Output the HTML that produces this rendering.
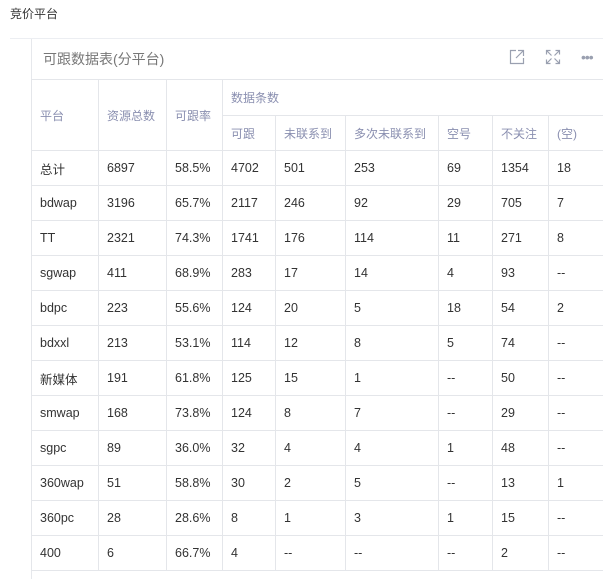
<!DOCTYPE html>
<html><head><meta charset="utf-8"><style>
body{margin:0;width:603px;height:570px;overflow:hidden;background:#fff;font-family:"Liberation Sans","Noto Sans CJK SC",sans-serif;position:relative}
.top{position:absolute;left:10px;top:5px;font-size:12px;color:#333}
.hr{position:absolute;left:10px;right:0;top:38px;height:1px;background:#eceef2}
.card{position:absolute;left:31px;top:39px;width:580px;height:540px;border-left:1px solid #e6e8ec}
.title{position:absolute;left:43px;top:49px;font-size:14px;color:#777}
table{position:absolute;left:31px;top:79px;border-collapse:collapse;font-size:12.5px;color:#333;table-layout:fixed;width:587px}
td{border:1px solid #e4e6ea;height:35px;padding:0 0 0 8px;box-sizing:border-box;white-space:nowrap}
.h td{color:#8a8fb0;font-size:12px}
.ic{position:absolute;top:49px;color:#aab;font-size:14px}
</style></head><body>
<div class="top">竞价平台</div>
<div class="hr"></div>
<div class="card"></div>
<div class="title">可跟数据表(分平台)</div>
<svg class="ic" style="left:509px;top:49px" width="16" height="16" viewBox="0 0 16 16" fill="none" stroke="#9aa0b0" stroke-width="1.2"><path d="M7 1.5H1.5v13h13V9M9 1.5h5.5V7M14.5 1.5L7 9"/></svg>
<svg class="ic" style="left:545px;top:49px" width="16" height="16" viewBox="0 0 16 16" fill="none" stroke="#9aa0b0" stroke-width="1.2"><path d="M1.5 5.5v-4h4M10.5 1.5h4v4M14.5 10.5v4h-4M5.5 14.5h-4v-4M1.5 1.5l5 5M14.5 1.5l-5 5M14.5 14.5l-5-5M1.5 14.5l5-5"/></svg>
<div style="position:absolute;left:581px;top:49px;font-size:14px;color:#9aa0b0;letter-spacing:-1px">•••</div>
<table>
<colgroup><col style="width:67px"><col style="width:68px"><col style="width:56px"><col style="width:53px"><col style="width:70px"><col style="width:93px"><col style="width:54px"><col style="width:56px"><col style="width:70px"></colgroup>
<tr class="h"><td rowspan="2" style="height:71px">平台</td><td rowspan="2">资源总数</td><td rowspan="2">可跟率</td><td colspan="6" style="height:36px">数据条数</td></tr>
<tr class="h"><td style="height:35px">可跟</td><td>未联系到</td><td>多次未联系到</td><td>空号</td><td>不关注</td><td>(空)</td></tr>
<tr><td>总计</td><td>6897</td><td>58.5%</td><td>4702</td><td>501</td><td>253</td><td>69</td><td>1354</td><td>18</td></tr>
<tr><td>bdwap</td><td>3196</td><td>65.7%</td><td>2117</td><td>246</td><td>92</td><td>29</td><td>705</td><td>7</td></tr>
<tr><td>TT</td><td>2321</td><td>74.3%</td><td>1741</td><td>176</td><td>114</td><td>11</td><td>271</td><td>8</td></tr>
<tr><td>sgwap</td><td>411</td><td>68.9%</td><td>283</td><td>17</td><td>14</td><td>4</td><td>93</td><td>--</td></tr>
<tr><td>bdpc</td><td>223</td><td>55.6%</td><td>124</td><td>20</td><td>5</td><td>18</td><td>54</td><td>2</td></tr>
<tr><td>bdxxl</td><td>213</td><td>53.1%</td><td>114</td><td>12</td><td>8</td><td>5</td><td>74</td><td>--</td></tr>
<tr><td>新媒体</td><td>191</td><td>61.8%</td><td>125</td><td>15</td><td>1</td><td>--</td><td>50</td><td>--</td></tr>
<tr><td>smwap</td><td>168</td><td>73.8%</td><td>124</td><td>8</td><td>7</td><td>--</td><td>29</td><td>--</td></tr>
<tr><td>sgpc</td><td>89</td><td>36.0%</td><td>32</td><td>4</td><td>4</td><td>1</td><td>48</td><td>--</td></tr>
<tr><td>360wap</td><td>51</td><td>58.8%</td><td>30</td><td>2</td><td>5</td><td>--</td><td>13</td><td>1</td></tr>
<tr><td>360pc</td><td>28</td><td>28.6%</td><td>8</td><td>1</td><td>3</td><td>1</td><td>15</td><td>--</td></tr>
<tr><td>400</td><td>6</td><td>66.7%</td><td>4</td><td>--</td><td>--</td><td>--</td><td>2</td><td>--</td></tr>
</table>
</body></html>
